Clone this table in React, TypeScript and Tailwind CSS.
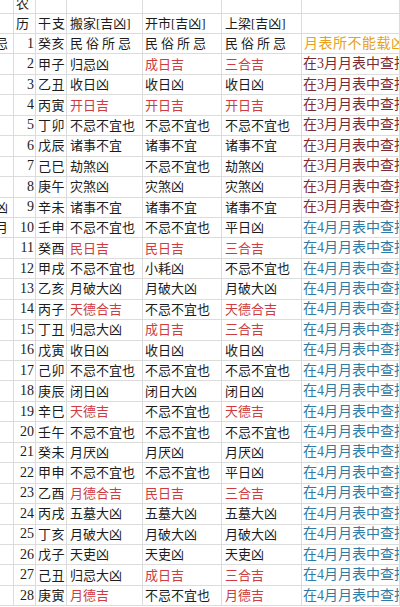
import React from "react";

type Tone = "k" | "r";
type Cell = [string, Tone?];

// 农历, 干支, 搬家, 开市, 上梁
const rows: [number, string, Cell, Cell, Cell][] = [
  [1, "癸亥", ["民俗所忌"], ["民俗所忌"], ["民俗所忌"]],
  [2, "甲子", ["归忌凶"], ["成日吉", "r"], ["三合吉", "r"]],
  [3, "乙丑", ["收日凶"], ["收日凶"], ["收日凶"]],
  [4, "丙寅", ["开日吉", "r"], ["开日吉", "r"], ["开日吉", "r"]],
  [5, "丁卯", ["不忌不宜也"], ["不忌不宜也"], ["不忌不宜也"]],
  [6, "戊辰", ["诸事不宜"], ["诸事不宜"], ["诸事不宜"]],
  [7, "己巳", ["劫煞凶"], ["不忌不宜也"], ["劫煞凶"]],
  [8, "庚午", ["灾煞凶"], ["灾煞凶"], ["灾煞凶"]],
  [9, "辛未", ["诸事不宜"], ["诸事不宜"], ["诸事不宜"]],
  [10, "壬申", ["不忌不宜也"], ["不忌不宜也"], ["平日凶"]],
  [11, "癸酉", ["民日吉", "r"], ["民日吉", "r"], ["三合吉", "r"]],
  [12, "甲戌", ["不忌不宜也"], ["小耗凶"], ["不忌不宜也"]],
  [13, "乙亥", ["月破大凶"], ["月破大凶"], ["月破大凶"]],
  [14, "丙子", ["天德合吉", "r"], ["不忌不宜也"], ["天德合吉", "r"]],
  [15, "丁丑", ["归忌大凶"], ["成日吉", "r"], ["三合吉", "r"]],
  [16, "戊寅", ["收日凶"], ["收日凶"], ["收日凶"]],
  [17, "己卯", ["不忌不宜也"], ["不忌不宜也"], ["不忌不宜也"]],
  [18, "庚辰", ["闭日凶"], ["闭日大凶"], ["闭日凶"]],
  [19, "辛巳", ["天德吉", "r"], ["不忌不宜也"], ["天德吉", "r"]],
  [20, "壬午", ["不忌不宜也"], ["不忌不宜也"], ["不忌不宜也"]],
  [21, "癸未", ["月厌凶"], ["月厌凶"], ["月厌凶"]],
  [22, "甲申", ["不忌不宜也"], ["不忌不宜也"], ["平日凶"]],
  [23, "乙酉", ["月德合吉", "r"], ["民日吉", "r"], ["三合吉", "r"]],
  [24, "丙戌", ["五墓大凶"], ["五墓大凶"], ["五墓大凶"]],
  [25, "丁亥", ["月破大凶"], ["月破大凶"], ["月破大凶"]],
  [26, "戊子", ["天吏凶"], ["天吏凶"], ["天吏凶"]],
  [27, "己丑", ["归忌大凶"], ["成日吉", "r"], ["三合吉", "r"]],
  [28, "庚寅", ["月德吉", "r"], ["不忌不宜也"], ["月德吉", "r"]],
];

const sideNotes: Record<number, string> = { 1: "忌", 9: "凶", 10: "月" };

const cols = "grid grid-cols-[14px_22px_31px_76px_79px_80px_1fr]";
const cell = "border-r border-b border-[#dcdcdc] overflow-hidden whitespace-nowrap flex items-center";

function tone(t?: Tone) {
  return t === "r" ? "text-[#cf3b40]" : "text-[#1c1c1c]";
}

function ValueCell({ c, pl }: { c: Cell; pl: string }) {
  const wide = c[0] === "民俗所忌";
  return (
    <div className={`${cell} ${pl} ${tone(c[1])} ${wide ? "tracking-[3px]" : ""}`}>
      {c[0]}
    </div>
  );
}

function NoteCell({ n }: { n: number }) {
  if (n === 1) {
    return (
      <div className={`${cell} pl-[2px] text-[#e6a21c] text-[14px] tracking-[0.5px]`}>
        月表所不能载凶
      </div>
    );
  }
  const blue = n >= 10;
  return (
    <div
      className={`${cell} pl-[1px] text-[14px] ${
        blue ? "text-[#2e7ca5]" : "text-[#7d2b33]"
      }`}
    >
      {blue ? "在4月月表中查找" : "在3月月表中查找"}
    </div>
  );
}

export default function App() {
  return (
    <div className="w-[400px] h-[607px] overflow-hidden bg-white font-['Liberation_Serif','Noto_Sans_CJK_SC',serif] text-[13px] leading-none text-[#1c1c1c]">
      <div className={`${cols} h-[14px]`}>
        <div className={cell} />
        <div className={`${cell} items-end pb-[3px] pl-[2px]`}>农</div>
        <div className={cell} />
        <div className={cell} />
        <div className={cell} />
        <div className={cell} />
        <div className={cell} />
      </div>
      <div className={`${cols} h-[20px]`}>
        <div className={cell} />
        <div className={`${cell} pl-[2px]`}>历</div>
        <div className={`${cell} pl-[2px] tracking-[1px]`}>干支</div>
        <div className={`${cell} pl-[3px]`}>搬家[吉凶]</div>
        <div className={`${cell} pl-[2px]`}>开市[吉凶]</div>
        <div className={`${cell} pl-[3px]`}>上梁[吉凶]</div>
        <div className={cell} />
      </div>
      {rows.map(([n, gz, d, e, f]) => (
        <div key={n} className={`${cols} h-[20.45px]`}>
          <div className={`${cell} justify-end pr-[5px]`}>{sideNotes[n] ?? ""}</div>
          <div className={`${cell} justify-end pr-[1px] text-[14px]`}>{n}</div>
          <div className={`${cell} pl-[2px] tracking-[0.5px]`}>{gz}</div>
          <ValueCell c={d} pl="pl-[3px]" />
          <ValueCell c={e} pl="pl-[2px]" />
          <ValueCell c={f} pl="pl-[3px]" />
          <NoteCell n={n} />
        </div>
      ))}
    </div>
  );
}
